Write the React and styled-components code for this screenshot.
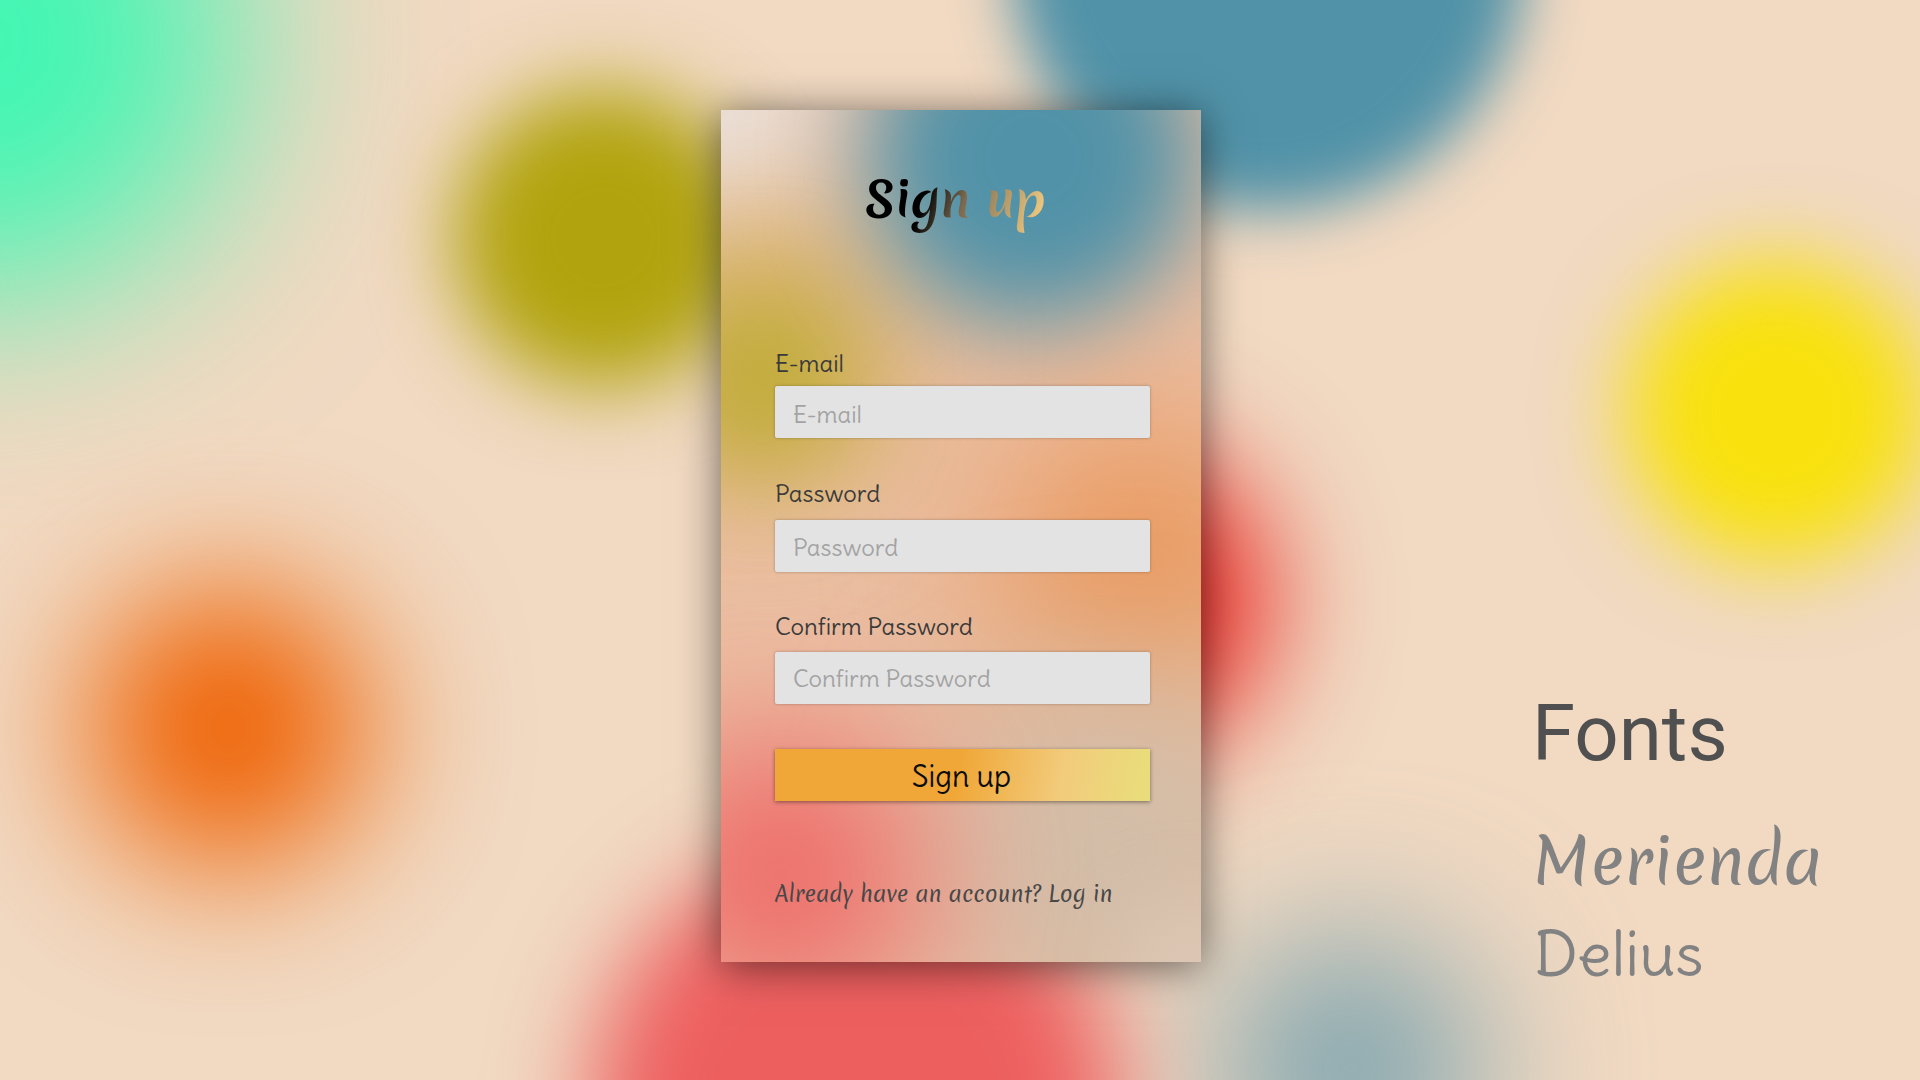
import React from "react";
import styled, { createGlobalStyle } from "styled-components";

const GlobalStyle = createGlobalStyle`
  *, *::before, *::after { box-sizing: border-box; }
  html, body { margin: 0; padding: 0; }
  body { overflow: hidden; }
`;

const script = `Merienda, Lato, "Open Sans", sans-serif`;
const hand = `Delius, Lato, "Open Sans", sans-serif`;

const Page = styled.main`
  position: relative;
  isolation: isolate;
  width: 1920px;
  height: 1080px;
  overflow: hidden;
  display: grid;
  grid-template-columns: 721px 480px 1fr;
  background: #f1d9c2;
`;

const Backdrop = styled.div`
  position: absolute;
  inset: 0;
  z-index: -1;
  overflow: hidden;
`;

const Blob = styled.span`
  position: absolute;
  left: ${(p) => p.$x - p.$r}px;
  top: ${(p) => p.$y - p.$r}px;
  width: ${(p) => p.$r * 2}px;
  height: ${(p) => p.$r * 2}px;
  border-radius: 50%;
  background: ${(p) => p.$color};
  filter: blur(${(p) => p.$blur}px);
`;

const Card = styled.form`
  position: relative;
  isolation: isolate;
  grid-column: 2;
  width: 480px;
  height: 852px;
  margin-top: 110px;
  padding: 57px 51px 0 54px;
  display: flex;
  flex-direction: column;
  background: #ebbfa3;
  box-shadow: 0 4px 40px rgba(0, 0, 0, 0.56);
`;

const Title = styled.h1`
  align-self: center;
  margin: 0 0 0 -14px;
  height: 70px;
  font: 700 48px/64px ${script};
  white-space: nowrap;
  color: transparent;
  background: linear-gradient(110deg, #000 34%, #7b6a50 54%, #e9c47f 92%);
  background-clip: text;
  -webkit-background-clip: text;
`;

const Fields = styled.div`
  display: flex;
  flex-direction: column;
  margin-top: 111px;
`;

const Field = styled.label`
  display: flex;
  flex-direction: column;
  height: ${(p) => p.$height}px;
`;

const Caption = styled.span`
  height: ${(p) => p.$height}px;
  font: 400 24px/30px ${hand};
  color: #3a3a3a;
`;

const Control = styled.span`
  display: flex;
  height: 52px;
  border-radius: 2px;
  background: #e3e3e3;
  box-shadow: 0 0 3px rgba(0, 0, 0, 0.3);
`;

const Input = styled.input`
  flex: 1;
  min-width: 0;
  padding: ${(p) => p.$drop}px 18px 0;
  border: 0;
  outline: 0;
  background: transparent;
  font: 400 24px/30px ${hand};
  &::placeholder { color: #a3a3a3; opacity: 1; }
`;

const Submit = styled.button`
  height: 52px;
  padding: 1px 2px 0 0;
  border: 0;
  background: linear-gradient(100deg, #f0a738 49%, #f2cb7b 76%, #eadb7b 96%);
  box-shadow: 0 1px 4px rgba(0, 0, 0, 0.45);
  font: 400 30px/52px ${hand};
  color: #0c0c0c;
`;

const LoginLink = styled.a`
  margin-top: 78px;
  font: 400 21px/30px ${script};
  white-space: nowrap;
  color: #484848;
`;

const Specimens = styled.aside`
  display: flex;
  flex-direction: column;
  align-items: flex-start;
  padding: 686px 0 0 331px;
`;

const SpecimenTitle = styled.h2`
  margin: 0;
  font: 400 78px/96px Roboto, sans-serif;
  color: #505050;
`;

const MeriendaName = styled.p`
  margin: 30px 0 0 1px;
  font: 400 62px/100px ${script};
  color: #828282;
`;

const DeliusName = styled.p`
  margin: -1px 0 0 2px;
  font: 400 62px/86px ${hand};
  color: #828282;
`;

const pageBlobs = [
  [-20, 40, 260, 100, "#42f6b3"],
  [603, 238, 150, 40, "#b1a30d"],
  [1268, -46, 257, 29, "#5192a8"],
  [1777, 412, 152, 42, "#f8e10c"],
  [228, 728, 142, 74, "#ef6000"],
  [1115, 600, 156, 60, "#ea2824"],
  [1350, 1068, 132, 78, "#7da4af"],
  [855, 1109, 264, 48, "#ed5f5f"],
];

const cardBlobs = [
  [-5, -5, 120, 60, "#ebe2dc"],
  [40, 245, 135, 66, "#d8b46c"],
  [40, 270, 88, 52, "#bfab34"],
  [419, 455, 150, 76, "#ea9a60"],
  [390, 740, 180, 78, "#d2bda8"],
  [60, 765, 142, 76, "#ee6a68"],
  [470, 860, 60, 40, "#dccab9"],
  [312, 48, 167, 48, "#5192a8"],
];

const Blobs = ({ items }) => (
  <Backdrop aria-hidden="true">
    {items.map(([x, y, r, blur, color]) => (
      <Blob key={`${x}:${y}:${r}`} $x={x} $y={y} $r={r} $blur={blur} $color={color} />
    ))}
  </Backdrop>
);

const fields = [
  { name: "E-mail", type: "email", height: 130, caption: 38, drop: 4 },
  { name: "Password", type: "password", height: 133, caption: 42, drop: 1 },
  { name: "Confirm Password", type: "password", height: 138, caption: 41, drop: 0 },
];

export default function App() {
  return (
    <Page>
      <GlobalStyle />
      <Blobs items={pageBlobs} />
      <Card>
        <Blobs items={cardBlobs} />
        <Title>Sign up</Title>
        <Fields>
          {fields.map((f) => (
            <Field key={f.name} $height={f.height}>
              <Caption $height={f.caption}>{f.name}</Caption>
              <Control>
                <Input type={f.type} placeholder={f.name} $drop={f.drop} />
              </Control>
            </Field>
          ))}
        </Fields>
        <Submit type="button">Sign up</Submit>
        <LoginLink>Already have an account? Log in</LoginLink>
      </Card>
      <Specimens>
        <SpecimenTitle>Fonts</SpecimenTitle>
        <MeriendaName>Merienda</MeriendaName>
        <DeliusName>Delius</DeliusName>
      </Specimens>
    </Page>
  );
}
